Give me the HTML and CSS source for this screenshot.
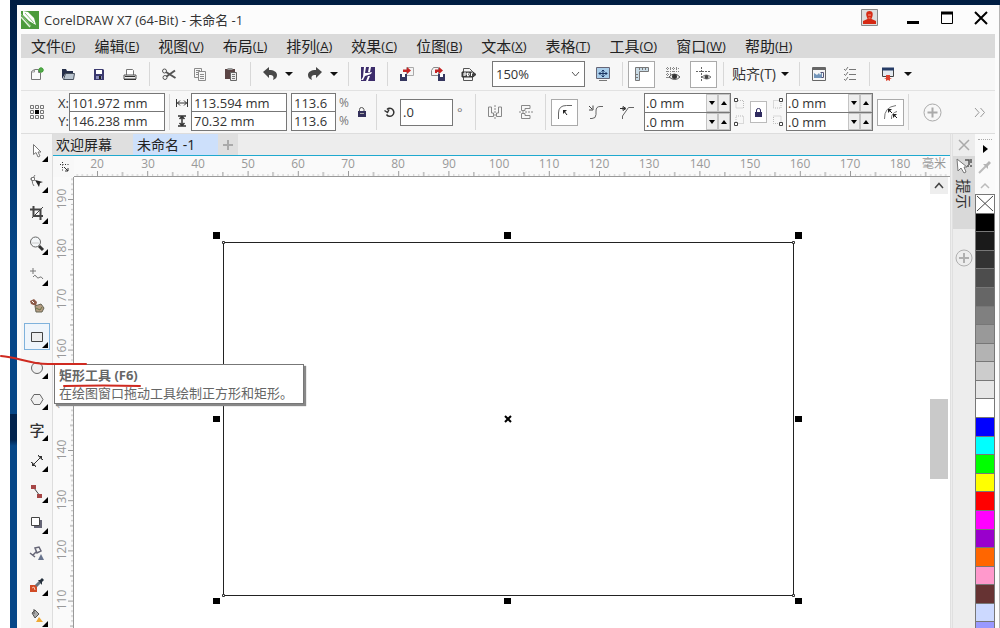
FILE: index.html
```html
<!DOCTYPE html>
<html lang="zh-CN">
<head>
<meta charset="utf-8">
<title>CorelDRAW X7 (64-Bit) - 未命名 -1</title>
<link rel="stylesheet" href="styles.css">
</head>
<body>
<div class="desktop">
<div class="window">
  <header class="titlebar">
    <svg class="logo" width="18" height="18" viewBox="0 0 18 18"><path fill="#4b9b3c" d="M0 0h18v18H0z"/><path fill="#fff" d="M2 0l5 1 6 6 2 7-7-4-6-6z"/><path d="M4 2l9 10M0 3l10 12" stroke="#8ac47e" fill="none"/><path d="M0 6l9 10" stroke="#e4f2e0" stroke-width="1.500"/></svg>
    <h1 class="title">CorelDRAW X7 (64-Bit) - 未命名 -1</h1>
    <button class="user" aria-label="账户"><svg width="17" height="17" viewBox="0 0 17 17"><path fill="#ddd" stroke="#888" d="M.5.5h16v16H.5z"/><path fill="#d62a14" d="M8.500 2C5 2 5 5 5.500 7c.5 2 1 2 1 3L2 12v3h13v-3l-4.500-2c0-1 .5-1 1-3 .5-2 .5-5-3-5z"/><path stroke="#f3a08f" d="M7 6h3M7.500 9h2"/></svg></button>
    <button class="winbtn" aria-label="最小化"><svg width="14" height="14"><path d="M1 11.500h12" stroke="#000" stroke-width="3"/></svg></button>
    <button class="winbtn" aria-label="最大化"><svg width="14" height="14"><path d="M1.500 2.500h11v10h-11z" fill="none" stroke="#000"/><path d="M1 2h12" stroke="#000" stroke-width="3"/></svg></button>
    <button class="winbtn" aria-label="关闭"><svg width="14" height="14"><path d="M1 1l12 12M13 1L1 13" stroke="#000" stroke-width="2"/></svg></button>
  </header>

  <nav class="menubar">
    <button>文件<span>(<u>F</u>)</span></button><button>编辑<span>(<u>E</u>)</span></button><button>视图<span>(<u>V</u>)</span></button><button>布局<span>(<u>L</u>)</span></button><button>排列<span>(<u>A</u>)</span></button><button>效果<span>(<u>C</u>)</span></button><button>位图<span>(<u>B</u>)</span></button><button>文本<span>(<u>X</u>)</span></button><button>表格<span>(<u>T</u>)</span></button><button>工具<span>(<u>O</u>)</span></button><button>窗口<span>(<u>W</u>)</span></button><button>帮助<span>(<u>H</u>)</span></button>
  </nav>

  <div class="toolbar">
    <button class="tb" aria-label="新建"><svg width="16" height="16"><path d="M2.500 5.500l3-2h4v3h2v7h-9z" fill="#fafafa" stroke="#777"/><path d="M2.500 6h3V4" fill="none" stroke="#999"/><circle cx="12" cy="4" r="2.500" fill="#3d9a35"/><path d="M12 1v6M9 4h6" stroke="#5bb050"/></svg></button>
    <button class="tb" aria-label="打开"><svg width="16" height="16"><path d="M2 13V3h4l1 2h6v3H5z" fill="#26304a"/><path d="M3.500 13.500l2-6h9l-1 6z" fill="#b9c4cf" stroke="#47505c"/></svg></button>
    <button class="tb" aria-label="保存"><svg width="16" height="16"><path d="M3 3h9l1 1v10H3z" fill="#3c3b70"/><path d="M5 4h6v4H5z" fill="#fff"/><path d="M5 10h6v3H5z" fill="#8e91bd"/><path d="M8 10h2v3H8z" fill="#222"/></svg></button>
    <button class="tb" aria-label="打印"><svg width="16" height="16"><path d="M4.500 9V3.500h6l1 1V9" fill="#fff" stroke="#777"/><path d="M2 9h12v4H2z" fill="#eee" stroke="#555"/><path d="M2 13.500h12M3 10.500h10" stroke="#333"/></svg></button>
    <i class="sep"></i>
    <button class="tb" aria-label="剪切"><svg width="16" height="16" fill="none" stroke="#555"><circle cx="3.500" cy="5" r="2"/><circle cx="4" cy="11.500" r="2"/><path d="M5 6l9.500 6M5.500 10.500L14 4.500" stroke-width="2"/></svg></button>
    <button class="tb" aria-label="复制"><svg width="16" height="16" fill="#f6f6f6" stroke="#8b8b8b"><path d="M2.500 2.500h7v9h-7z"/><path d="M6.500 5.500h7v9h-7z"/><path d="M8 8.500h4M8 10.500h4M8 12.500h4M4 4.500h4M4 6.500h2M4 8.500h2"/></svg></button>
    <button class="tb" aria-label="粘贴"><svg width="16" height="16"><path d="M2 3h10v10H2z" fill="#5b4545"/><path d="M4.500 2h5v2h-5z" fill="#999"/><path d="M7.500 6.500h6v8h-6z" fill="#eee" stroke="#666"/><path d="M9 8.500h3M9 10.500h3M9 12.500h3" stroke="#777"/></svg></button>
    <i class="sep"></i>
    <button class="tb" aria-label="撤销"><svg width="16" height="16"><path d="M1 6l6-5v3c5 0 8 2 8 5 0 2-1 4-4 5 1-3 1-5-4-5v3z" fill="#484848"/></svg></button>
    <button class="caret" aria-label="撤销列表"></button>
    <button class="tb" aria-label="重做"><svg width="16" height="16"><path d="M15 6L9 1v3C4 4 1 6 1 9c0 2 1 4 4 5-1-3-1-5 4-5v3z" fill="#484848"/></svg></button>
    <button class="caret" aria-label="重做列表"></button>
    <i class="sep"></i>
    <button class="tb" aria-label="搜索内容"><svg width="16" height="16"><path d="M1 1h14v14H1z" fill="#3c2c6b"/><path d="M4 1h2L5 7h2l5-1-1 2-6 2-2 4H1l2-3z" fill="#fff"/><path d="M9 1h2l-1 5H8zM8 10h2l-2 5H6z" fill="#fff"/></svg></button>
    <i class="sep"></i>
    <button class="tb" aria-label="导入"><svg width="16" height="16"><path d="M7.500 1.500h7v8h-7z" fill="#f4f4f4" stroke="#aaa"/><path d="M1 8h7v7H1z" fill="#35365f"/><path d="M3 8h3v3H3z" fill="#fff"/><path d="M4 6V3.500h4V1l4 3.500L8 8V6z" fill="#c52424"/></svg></button>
    <button class="tb" aria-label="导出"><svg width="16" height="16"><path d="M1.500 4.500l2-3h5v8h-7z" fill="#f4f4f4" stroke="#888"/><path d="M8 8h7v7H8z" fill="#35365f"/><path d="M10 8h3v3h-3z" fill="#fff"/><path d="M5 7V3.500h4V1l4 3.500L9 8V6H7v1z" fill="#c52424"/></svg></button>
    <button class="tb" aria-label="发布为 PDF"><svg width="16" height="16" fill="none" stroke="#333"><path d="M2.500 14.500v-12h6l3 3v9z" fill="#f5f5f5" stroke="#555"/><path d="M1 6h11l3 2.500-3 2.500H1z" fill="#444"/><path d="M3 10V7h2v2H3M6.500 7h1l1 1-1 2h-1zM10.500 10V7H12" stroke="#fff"/></svg></button>
    <select class="zoom" aria-label="缩放级别"><option>150%</option></select>
    <button class="tb full" aria-label="全屏预览"><svg width="16" height="16"><path d="M1.500 1.500h13v11h-13z" fill="#a9cdea" stroke="#667"/><path d="M4 7.500h8M8 4v7M6.500 5.500L8 4l1.500 1.500M6.500 9.500L8 11l1.500-1.500M5.500 6L4 7.500 5.500 9M10.500 6L12 7.500 10.500 9" stroke="#1b3461" fill="none"/><path d="M4 14.500h8" stroke="#777"/></svg></button>
    <i class="sep"></i>
    <button class="tb on" aria-label="显示标尺"><svg width="16" height="16"><path d="M1.500 1.500h13v4h-9v9h-4z" fill="#c9dbe6" stroke="#777"/><path d="M5.500 2v2M8.500 2v2M11.500 2v2M2 8.500h2M2 11.500h2" stroke="#777"/></svg></button>
    <button class="tb" aria-label="显示网格"><svg width="16" height="16"><path d="M1 2.500h13M1 5.500h13M1 8.500h5M1 11.500h4M2.500 1v12M5.500 1v11M8.500 1v6M11.500 1v6" stroke="#888" stroke-dasharray="1 1"/><path d="M4 11q5-6 11 0-5 5-11 0z" fill="#eee" stroke="#555"/><circle cx="9.500" cy="10.500" r="2.500" fill="#333"/></svg></button>
    <button class="tb on" aria-label="显示辅助线"><svg width="16" height="16"><path d="M0 5.500h15M5.500 1v14" stroke="#666" stroke-dasharray="2 1"/><path d="M6 11q4-4 9 0-4 4-9 0z" fill="#eee" stroke="#777"/><circle cx="10.500" cy="11" r="2" fill="#444"/></svg></button>
    <i class="sep"></i>
    <button class="snap">贴齐(T)</button><button class="caret" aria-label="贴齐选项"></button>
    <i class="sep"></i>
    <button class="tb" aria-label="欢迎屏幕"><svg width="16" height="16"><path d="M1.500 1.500h13v13h-13z" fill="#f6f6f6" stroke="#666"/><path d="M2 3h12" stroke="#666" stroke-width="2"/><path d="M3 7l3 2 2-2 1 2 2-3v6H3z" fill="#7395b9"/><path d="M9.500 6.500h3v5h-2" stroke="#557" fill="none"/></svg></button>
    <button class="tb" aria-label="选项"><svg width="16" height="16" stroke="#777" fill="none"><path d="M7 3.500h7M7 8.500h7M7 13.500h7M2 3l1.500 1.500L6 1M2 8l1.500 1.500L6 6M2 13l1.500 1.500L6 11"/></svg></button>
    <i class="sep"></i>
    <button class="tb" aria-label="应用程序启动器"><svg width="16" height="16"><path d="M1.500 2.500h11v8h-11z" fill="#e4eaf0" stroke="#444"/><path d="M1 3h12" stroke="#263c66" stroke-width="3"/><path d="M5 9h4v3h2l-2 1v2l-2-1-2 1v-2l-2-1h2z" fill="#dc4330"/></svg></button>
    <button class="caret" aria-label="启动器列表"></button>
  </div>

  <div class="props">
    <svg class="origin" width="16" height="16" fill="none" stroke="#777"><path d="M1.500 1.500h3v3h-3zM6.500 1.500h3v3h-3zM11.500 1.500h3v3h-3zM1.500 6.500h3v3h-3zM11.500 6.500h3v3h-3zM1.500 11.500h3v3h-3zM6.500 11.500h3v3h-3zM11.500 11.500h3v3h-3z"/><path fill="#000" stroke="none" d="M6 6h4v4H6z"/></svg>
    <div class="marks xy"><label for="px">X:</label><label for="py">Y:</label></div>
    <div class="pair wide"><input id="px" value="101.972 mm"><input id="py" value="146.238 mm"></div>
    <i class="sep tall"></i>
    <div class="marks wh">
      <label for="pw" aria-label="宽度"><svg width="12" height="10"><path d="M.5 1v8M11.500 1v8M1 5h10M4 2.500L1.500 5 4 7.500M8 2.500L10.500 5 8 7.500" stroke="#333" fill="none"/></svg></label>
      <label for="ph" aria-label="高度"><svg width="12" height="12"><path d="M2 1h8M2 11h8M6 1v10M3.500 4L6 1.500 8.500 4M3.500 8L6 10.500 8.500 8" stroke="#333" stroke-width="1.500" fill="none"/></svg></label>
    </div>
    <div class="pair wide"><input id="pw" value="113.594 mm"><input id="ph" value="70.32 mm"></div>
    <div class="pair pct"><input id="sx" value="113.6"><input id="sy" value="113.6"></div>
    <div class="marks unit"><label for="sx">%</label><label for="sy">%</label></div>
    <button class="ic" aria-label="锁定比率"><svg width="10" height="12"><path d="M1 5h8v6H1z" fill="#34315b"/><path d="M2.500 5V3.500q0-2 2-2t2.500 2V5" fill="none" stroke="#555"/><path d="M3 7.500h4" stroke="#aaa"/></svg></button>
    <i class="sep tall"></i>
    <label class="rotlabel" for="rot" aria-label="旋转角度"><svg width="12" height="12" fill="none" stroke="#333"><path d="M3 3.500a4 4 0 1 1-.5 5" stroke-width="1.500"/><path d="M.5 4.500l3 2 1.500-3" stroke-width="1.500"/></svg></label>
    <input class="rot" id="rot" value=".0"><span class="deg">°</span>
    <i class="sep tall"></i>
    <button class="tb" aria-label="水平镜像"><svg width="16" height="16" fill="none" stroke="#888"><path d="M1.500 3v9.500h5V9h-2V3zM14.500 3v9.500h-5V9h2V3z"/><path d="M8 1v14" stroke-dasharray="2 1"/></svg></button>
    <button class="tb" aria-label="垂直镜像"><svg width="16" height="16" fill="none" stroke="#888"><path d="M12 1.500H3.500v5H7v-2h5zM12 14.500H3.500v-5H7v2h5z"/><path d="M1 8h14" stroke-dasharray="2 1"/></svg></button>
    <i class="sep tall"></i>
    <button class="tb on" aria-label="圆角"><svg width="16" height="16" fill="none" stroke="#666"><path d="M1.500 15V9q0-7.500 8-7.500H15"/><path d="M6 6h4L6 10z" fill="#222" stroke="none"/><path d="M7 7l3 4" stroke="#222"/></svg></button>
    <button class="tb" aria-label="扇形角"><svg width="16" height="16" fill="none" stroke="#666"><path d="M2 14.500h2q4 0 4-4V7q0-4.500 4-4.500h3"/><path d="M1 2l3 3M5 1.500V6H1" stroke="#444"/></svg></button>
    <button class="tb" aria-label="倒棱角"><svg width="16" height="16" fill="none" stroke="#666"><path d="M3.500 15v-3l6-8.500H15"/><path d="M1 4.500h5M4 2.500v4l3-2z" stroke="#333"/></svg></button>
    <div class="spin first">
      <div class="row"><input aria-label="左上角半径" value=".0 mm"><button class="dn" aria-label="减"></button><button class="up" aria-label="加"></button></div>
      <div class="row"><input aria-label="左下角半径" value=".0 mm"><button class="dn" aria-label="减"></button><button class="up" aria-label="加"></button></div>
    </div>
    <svg class="corners" width="14" height="32" fill="none"><path d="M4 4.500h7.500V12H4zM4 20h7.500v7.500H4z" stroke="#bbb" stroke-dasharray="1 1"/><path d="M2.500 2.500h3v3h-3zM2.500 26.500h3v3h-3z" fill="#fff" stroke="#444"/></svg>
    <button class="lockall" aria-label="同时编辑所有角"><svg width="9" height="11"><path d="M1 5h7v5H1z" fill="#302c60"/><path d="M2.500 5V3q0-1.500 2-1.500T6.500 3v2" fill="none" stroke="#302c60"/></svg></button>
    <svg class="corners" width="14" height="32" fill="none"><path d="M2.500 4.500H10V12H2.500zM2.500 20H10v7.500H2.500z" stroke="#bbb" stroke-dasharray="1 1"/><path d="M8.500 2.500h3v3h-3zM8.500 26.500h3v3h-3z" fill="#fff" stroke="#444"/></svg>
    <div class="spin">
      <div class="row"><input aria-label="右上角半径" value=".0 mm"><button class="dn" aria-label="减"></button><button class="up" aria-label="加"></button></div>
      <div class="row"><input aria-label="右下角半径" value=".0 mm"><button class="dn" aria-label="减"></button><button class="up" aria-label="加"></button></div>
    </div>
    <button class="tb on rel" aria-label="相对角缩放"><svg width="16" height="16" fill="none" stroke="#777"><path d="M1.500 15Q1 3 13 1.500M8.500 15Q8 9 14 7.500"/><path d="M5 5h4L5 9zM10 10h4l-4 4z" fill="#222" stroke="none"/><path d="M6 6l3 3M11 11l3 3" stroke="#222"/></svg></button>
    <i class="sep tall"></i>
    <button class="plus" aria-label="快速自定义"><svg width="19" height="19" fill="none" stroke="#aaa"><circle cx="9.500" cy="9.500" r="8.500"/><path d="M9.500 4.500v10M4.500 9.500h10" stroke-width="2"/></svg></button>
    <button class="more" aria-label="更多"><svg width="12" height="11" fill="none" stroke="#999"><path d="M1 1l4 4.500L1 10M6.500 1l4 4.500-4 4.500"/></svg></button>
  </div>

  <div class="workspace">
    <div class="toolbox">
      <button class="tool fly" aria-label="选择工具"><svg width="16" height="16"><path d="M4.500 1.500v10l2.500-2 2 4.500 2-1-2-4h3z" fill="#fff" stroke="#777"/></svg></button>
      <button class="tool fly" aria-label="形状工具"><svg width="16" height="16"><path d="M6 1q-5 6-1 11M1 5h5" fill="none" stroke="#777"/><path d="M2.500 3.500h3v3h-3z" fill="#fff" stroke="#777"/><path d="M6 6l8 2-3 1-1 4z" fill="#222"/></svg></button>
      <button class="tool fly" aria-label="裁剪工具"><svg width="16" height="16" fill="none" stroke="#444"><path d="M4.500 1v10H14M1 4.500h10.500V15" stroke-width="2"/><path d="M3 13L14 2"/></svg></button>
      <button class="tool fly" aria-label="缩放工具"><svg width="16" height="16"><circle cx="6.500" cy="6" r="5" fill="#f3f6f8" stroke="#666"/><path d="M3 7h7" stroke="#ccc"/><path d="M10 10l4 4" stroke="#333" stroke-width="3"/></svg></button>
      <button class="tool fly" aria-label="手绘工具"><svg width="16" height="16" fill="none" stroke="#777"><path d="M1 4h6M4 1v6M4 10q2-3 3-1t2 2 2-1 3 2"/></svg></button>
      <button class="tool" aria-label="艺术笔"><svg width="16" height="16"><path d="M1 3l4-2 3 3-1 4-5-2z" fill="#8c5b4a"/><path d="M3 3l2 2" stroke="#fff"/><path d="M6 8l6-2 3 4-2 4H7z" fill="#b49b82" stroke="#665"/><path d="M7 10l4 2 2-3" stroke="#674" fill="none"/></svg></button>
      <div class="slot">
        <button class="tool fly active" aria-label="矩形工具" aria-describedby="tip"><svg width="16" height="16"><path d="M2.500 3.500h11v9h-11z" fill="#eee" stroke="#444"/></svg></button>
        <div class="tip" id="tip" role="tooltip"><strong>矩形工具 (F6)</strong><span>在绘图窗口拖动工具绘制正方形和矩形。</span></div>
      </div>
      <button class="tool fly" aria-label="椭圆形工具"><svg width="16" height="16"><circle cx="8" cy="8" r="5.500" fill="#f0f0f0" stroke="#666"/></svg></button>
      <button class="tool fly" aria-label="多边形工具"><svg width="16" height="16"><path d="M5 3.500h6L14 8.500l-3 5H5L2 8.500z" fill="#f0f0f0" stroke="#666"/></svg></button>
      <button class="tool fly glyph" aria-label="文本工具">字</button>
      <button class="tool fly" aria-label="平行度量工具"><svg width="16" height="16"><path d="M3 13L13 3M2 9l5 5M9 2l5 5" stroke="#333" fill="none"/><path d="M3 9l4 4-4 0zM9 3h4v4z" fill="#333"/></svg></button>
      <button class="tool fly" aria-label="连接器工具"><svg width="16" height="16"><path d="M5 4l6 8" stroke="#444"/><path d="M2 1h5v4H2zM8 10h5v4H8z" fill="#a64646"/></svg></button>
      <button class="tool fly" aria-label="阴影工具"><svg width="16" height="16"><path d="M5 5h8v8H5z" fill="#667"/><path d="M2.500 2.500h8v8h-8z" fill="#fff" stroke="#444"/></svg></button>
      <button class="tool" aria-label="透明度工具"><svg width="16" height="16"><path d="M6 2l4-1 2 4-4 2zM7 6L4 9M1 7l5 4" fill="none" stroke="#667" stroke-width="1.500"/><path d="M12 8l3 6H9z" fill="#67738d"/></svg></button>
      <button class="tool fly" aria-label="颜色滴管工具"><svg width="16" height="16"><path d="M1 8h7v7H1z" fill="#d14b25"/><path d="M3 11l2-1 1 3" fill="none" stroke="#f5c4b0"/><path d="M7 9l4-4" stroke="#68737e" stroke-width="3"/><path d="M9 3h2l2-2 2 2-2 2v3z" fill="#25303c"/></svg></button>
      <button class="tool fly" aria-label="交互式填充工具"><svg width="16" height="16"><path d="M3 5l3-3 4 4-4 4z" fill="#aaa" stroke="#555"/><path d="M5 1v5" stroke="#555"/><path d="M7 14l3-5 4 5z" fill="#efaa35"/></svg></button>
    </div>

    <main class="document">
      <div class="tabs"><button class="tab home">欢迎屏幕</button><button class="tab current">未命名 -1</button><button class="tab add" aria-label="新建文档"><svg width="12" height="12"><path d="M6 1v10M1 6h10" stroke="#aaa" stroke-width="2"/></svg></button></div>
      <div class="view">
        <div class="corner"><svg width="10" height="10"><path d="M1 2.500h9M3.500 0v10" stroke="#333" stroke-dasharray="1 1.500"/><path d="M5 5l4 4M9 6v3H6" stroke="#333" fill="none"/></svg></div>
        <svg class="hruler" width="100%" height="21">
          <defs><pattern id="hp" x="23" y="0" width="50.200" height="21" patternUnits="userSpaceOnUse"><path d="M.5 15v5M25.500 16v4" stroke="#999"/><path d="M5.500 18v2M10.500 18v2M15.500 18v2M20.500 18v2M30.500 18v2M35.500 18v2M40.500 18v2M45.500 18v2" stroke="#ccc"/></pattern></defs>
          <rect width="100%" height="21" fill="url(#hp)"/>
          <g class="nums"><text x="23" y="12">20</text><text x="74" y="12">30</text><text x="124" y="12">40</text><text x="174" y="12">50</text><text x="224" y="12">60</text><text x="274" y="12">70</text><text x="324" y="12">80</text><text x="375" y="12">90</text><text x="425" y="12">100</text><text x="475" y="12">110</text><text x="525" y="12">120</text><text x="575" y="12">130</text><text x="626" y="12">140</text><text x="676" y="12">150</text><text x="726" y="12">160</text><text x="776" y="12">170</text><text x="826" y="12">180</text><text x="860" y="12">毫米</text></g>
        </svg>
        <svg class="vruler" width="21" height="100%">
          <defs><pattern id="vp" x="0" y="22" width="21" height="50.200" patternUnits="userSpaceOnUse"><path d="M15 .5h5M17 25.500h3" stroke="#999"/><path d="M18 5.500h2M18 10.500h2M18 15.500h2M18 20.500h2M18 30.500h2M18 35.500h2M18 40.500h2M18 45.500h2" stroke="#bbb"/></pattern></defs>
          <rect width="21" height="100%" fill="url(#vp)"/>
          <g class="nums"><text transform="translate(13 22) rotate(-90)">190</text><text transform="translate(13 72) rotate(-90)">180</text><text transform="translate(13 122) rotate(-90)">170</text><text transform="translate(13 172) rotate(-90)">160</text><text transform="translate(13 222) rotate(-90)">150</text><text transform="translate(13 273) rotate(-90)">140</text><text transform="translate(13 323) rotate(-90)">130</text><text transform="translate(13 373) rotate(-90)">120</text><text transform="translate(13 423) rotate(-90)">110</text></g>
        </svg>
        <svg class="canvas" width="100%" height="100%">
          <path d="M149.500 65.500h570v353h-570z" fill="none" stroke="#222"/>
          <path d="M148.500 64.500h2v2h-2zM718.500 64.500h2v2h-2zM148.500 417.500h2v2h-2zM718.500 417.500h2v2h-2z" fill="#fff" stroke="#333"/>
          <path d="M139 55h7v7h-7zM430 55h7v7h-7zM721 55h7v7h-7zM139 239h7v6h-7zM721 239h7v6h-7zM139 421h7v6h-7zM430 421h7v6h-7zM721 421h7v6h-7z" fill="#000"/>
          <path d="M431 239l6 6M437 239l-6 6" stroke="#000" stroke-width="2"/>
        </svg>
        <div class="scroll"><button aria-label="向上滚动"><svg width="10" height="7"><path d="M1 6l4-4.500L9 6" fill="none" stroke="#444" stroke-width="1.500"/></svg></button><div class="track"><div class="thumb"></div></div></div>
      </div>
    </main>

    <aside class="docker">
      <button class="close" aria-label="关闭"><svg width="12" height="12"><path d="M1 1l10 10M11 1L1 11" stroke="#aaa" stroke-width="1.500"/></svg></button>
      <button class="hint"><svg width="20" height="20"><path d="M3 3l1 12 3-3 3 5 2-1-2-5h3z" fill="#fff" stroke="#777"/><path d="M11 4h4v5M17 3v4M13 10h2M17 9v2" fill="none" stroke="#555" stroke-width="1.500"/></svg><span>提示</span></button>
      <button class="plus" aria-label="添加泊坞窗"><svg width="18" height="18" fill="none" stroke="#b0b0b0"><circle cx="9" cy="9" r="8"/><path d="M9 4v10M4 9h10" stroke-width="2"/></svg></button>
    </aside>

    <aside class="palette">
      <i class="grip"></i>
      <button aria-label="调色板菜单"><svg width="8" height="10"><path d="M2 1l5 4-5 4z" fill="#000"/></svg></button>
      <button aria-label="滴管"><svg width="14" height="14"><path d="M1 13l7-7" stroke="#bbb" stroke-width="2"/><path d="M5 4h3l3-3 2 2-3 3v3z" fill="#b5b5b5"/></svg></button>
      <button aria-label="向上"><svg width="10" height="7"><path d="M1 6l4-4 4 4" fill="none" stroke="#bbb" stroke-width="1.500"/></svg></button>
      <div class="swatches">
        <button class="none" aria-label="无"><svg width="18" height="17"><path d="M1 1l16 15M17 1L1 16" stroke="#444"/></svg></button>
        <button class="k100"></button><button class="k90"></button><button class="k80"></button><button class="k70"></button><button class="k60"></button><button class="k50"></button><button class="k40"></button><button class="k30"></button><button class="k20"></button><button class="k10"></button><button class="white"></button><button class="blue"></button><button class="cyan"></button><button class="green"></button><button class="yellow"></button><button class="red"></button><button class="magenta"></button><button class="purple"></button><button class="orange"></button><button class="pink"></button><button class="brown"></button><button class="powder"></button><button class="lilac"></button>
      </div>
    </aside>
  </div>
</div>
<svg class="ink" width="150" height="40" fill="none" stroke="#cf2a20" stroke-width="2" stroke-linecap="round"><path d="M1 6C18 7 28 14 48 14H86"/><path d="M64 36q40-1 76 0"/></svg>
</div>
</body>
</html>
```
FILE: styles.css
```css
* { box-sizing: border-box; }
body {
  margin: 0;
  height: 100vh;
  overflow: hidden;
  font: 13px/16px "Open Sans", "Noto Sans CJK SC", sans-serif;
  color: #333;
  background: #fff;
}
button, input, select { font: inherit; color: inherit; margin: 0; }
button { border: 0; padding: 0; background: none; display: flex; align-items: center; justify-content: center; }
svg { display: block; flex: none; }

.desktop {
  position: relative;
  height: 100%;
  margin-left: 10px;
  padding: 5px 0 0 7px;
  background: linear-gradient(#001d42, #003064 20%, #064788 40%, #064788 66%, #00224d 66%, #00224d 70%, #064788 71%);
}
.window {
  height: 100%;
  display: flex;
  flex-direction: column;
  padding: 0 4px;
  border-right: 1px solid #b5b5b5;
  background: #fcfcfc;
}

.titlebar { flex: none; height: 29px; display: flex; align-items: center; padding-right: 7px; }
.title { margin: 0 auto 0 5px; font-size: 13px; font-weight: 400; }
.user { margin-right: 28px; margin-bottom: 4px; }
.winbtn { width: 14px; margin-left: 20px; margin-bottom: 4px; }
.user + .winbtn { margin-left: 0; }

.menubar { flex: none; height: 24px; display: flex; gap: 19px; padding-left: 10px; background: #dadada; }
.menubar button { font-size: 15px; color: #222; }
.menubar span { font-size: 13px; }

.toolbar, .props { flex: none; display: flex; align-items: center; background: #f7f7f7; }
.toolbar { height: 33px; border-bottom: 1px solid #e2e2e2; }
.props { height: 43px; border-bottom: 1px solid #ddd; }
.tb { flex: none; width: 31px; height: 28px; }
.tb.on { width: 27px; height: 27px; margin: 0 2px; border: 1px solid #aaa; background: #fff; }
.sep { flex: none; width: 1px; height: 24px; margin: 0 3px 0 4px; background: #d8d8d8; }
.sep.tall { height: 36px; }
.caret { flex: none; width: 14px; height: 24px; justify-content: flex-start; }
.caret::before { content: ""; border: solid transparent; border-width: 4px 4px 0; border-top-color: #111; }
.zoom {
  flex: none;
  width: 93px;
  height: 26px;
  margin-left: 8px;
  padding: 0 3px;
  border: 1px solid #777;
  border-radius: 0;
  appearance: none;
  background: #fff url("data:image/svg+xml,%3Csvg xmlns='http://www.w3.org/2000/svg' width='9' height='6'%3E%3Cpath d='M1 1l3.500 4L8 1' fill='none' stroke='%23555'/%3E%3C/svg%3E") no-repeat right 4px center;
}
.full { margin-left: 2px; }
.snap { flex: none; width: 54px; font-size: 14px; }

.props input { border: 1px solid #777; border-radius: 0; background: #fff; padding: 0 2px; min-width: 0; outline: 0; }
.origin { margin: 0 11px 0 8px; }
.marks { display: grid; grid-template-rows: 18px 18px; align-items: center; }
.xy { width: 13px; justify-items: end; }
.wh { width: 18px; justify-items: center; }
.unit { width: 16px; justify-items: center; color: #777; font-size: 12px; }
.pair { flex: none; display: grid; grid-template-rows: 19px 19px; }
.pair input + input { margin-top: -1px; height: 20px; }
.wide { width: 96px; }
.pct { width: 45px; margin-left: 4px; }
.ic { width: 20px; height: 24px; }
.rotlabel { width: 20px; display: grid; justify-items: center; }
.rot { width: 53px; height: 27px; }
.deg { width: 18px; padding-left: 4px; color: #777; }
.first { margin-left: 2px; }
.spin { flex: none; width: 87px; border: 1px solid #777; background: #fff; }
.spin .row { display: grid; grid-template-columns: 1fr 12px 12px; height: 18px; }
.spin .row + .row { border-top: 1px solid #777; }
.spin .row input { border: 0; width: 100%; padding: 0 1px; }
.spin button { border: 1px solid #c4c4c4; background: #eee; }
.dn::before, .up::before { content: ""; border: 3px solid transparent; border-width: 4px 3px; }
.dn::before { border-top-color: #000; border-bottom-width: 0; }
.up::before { border-bottom-color: #000; border-top-width: 0; }
.corners { margin: 0 1px; }
.lockall { flex: none; width: 17px; height: 22px; margin: 0 3px; border: 1px solid #bbb; background: #fff; }
.props .rel { margin: 0 0 0 4px; }
.props .plus { margin-left: 11px; }
.more { margin-left: auto; padding-right: 9px; }

.workspace { flex: 1; min-height: 0; display: flex; }
.toolbox { flex: none; width: 32px; padding-top: 1px; background: #f6f6f6; border-right: 1px solid #ddd; }
.tool { position: relative; width: 32px; height: 31px; }
.fly::after { content: ""; position: absolute; right: 5px; bottom: 4px; border: solid transparent; border-width: 0 0 6px 6px; border-bottom-color: #000; }
.active { width: 26px; height: 27px; margin: 0 3px; border: 1px solid #7fb2dc; background: #eff5fb; }
.active::after { right: 1px; bottom: 1px; }
.glyph { font-size: 15px; font-weight: 500; }
.slot { position: relative; height: 31px; padding-top: 2px; }
.tip {
  position: absolute;
  z-index: 2;
  left: 33px;
  top: 43px;
  width: 250px;
  height: 40px;
  padding: 0 4px;
  display: grid;
  grid-template-rows: 19px 18px;
  align-items: center;
  white-space: nowrap;
  color: #666;
  background: #fff;
  border: 1px solid #777;
  box-shadow: 2px 2px 1px #888;
}

.document { flex: 1; min-width: 0; display: flex; flex-direction: column; }
.tabs { flex: none; height: 22px; display: flex; background: #ededed; border-bottom: 1px solid #1fa9cf; }
.tab { font-size: 14px; color: #222; background: #dfdfdf; }
.home { width: 80px; justify-content: flex-start; padding-left: 3px; }
.current { width: 85px; padding-left: 4px; justify-content: flex-start; background: #cde0fb; }
.add { width: 20px; }
.view { flex: 1; min-height: 0; display: grid; grid-template: 21px 1fr / 21px 1fr 20px; background: #fff; }
.corner { background: #f8f8f8; display: grid; place-items: center; }
.hruler { grid-column: 2 / 4; background: #fafafa; border-bottom: 1px solid #999; }
.vruler { background: #fafafa; border-right: 1px solid #999; min-height: 0; }
.canvas { min-width: 0; min-height: 0; overflow: hidden; }
.nums { font-size: 12px; fill: #999; text-anchor: middle; }
.scroll { display: flex; flex-direction: column; padding: 0 2px 0 0; }
.scroll button { height: 17px; background: #eee; }
.track { display: flex; flex-direction: column; flex: 1; padding: 205px 0 0; }
.thumb { height: 80px; background: #c9c9c9; }

.docker { flex: none; width: 25px; border-left: 3px double #e0e0e0; display: flex; flex-direction: column; align-items: center; background: #ededed; }
.docker .close { height: 22px; }
.hint { width: 100%; height: 73px; flex-direction: column; justify-content: flex-start; gap: 3px; background: #d9d9d9; }
.hint span { writing-mode: vertical-rl; text-orientation: sideways; font-size: 15px; line-height: 20px; }
.docker .plus { margin-top: 20px; }

.palette { flex: none; width: 20px; display: flex; flex-direction: column; align-items: center; padding-top: 5px; background: #fafafa; overflow: hidden; }
.grip { flex: none; width: 14px; border-top: 1px dotted #aaa; }
.palette > button { flex: none; height: 18px; }
.swatches { flex: none; width: 20px; height: 447px; display: grid; grid-template-rows: repeat(24, 1fr); gap: 1px; padding: 1px; background: #777; }
.none, .white { background: #fff; }
.k100 { background: #000; }
.k90 { background: #1a1a1a; }
.k80 { background: #333; }
.k70 { background: #4d4d4d; }
.k60 { background: #666; }
.k50 { background: #808080; }
.k40 { background: #999; }
.k30 { background: #b3b3b3; }
.k20 { background: #ccc; }
.k10 { background: #e6e6e6; }
.blue { background: #00f; }
.cyan { background: #0ff; }
.green { background: #0f0; }
.yellow { background: #ff0; }
.red { background: #f00; }
.magenta { background: #f0f; }
.purple { background: #90c; }
.orange { background: #f60; }
.pink { background: #f9c; }
.brown { background: #633; }
.powder { background: #ccd9ff; }
.lilac { background: #99f; }

.ink { position: absolute; z-index: 3; left: -10px; top: 350px; }
```
